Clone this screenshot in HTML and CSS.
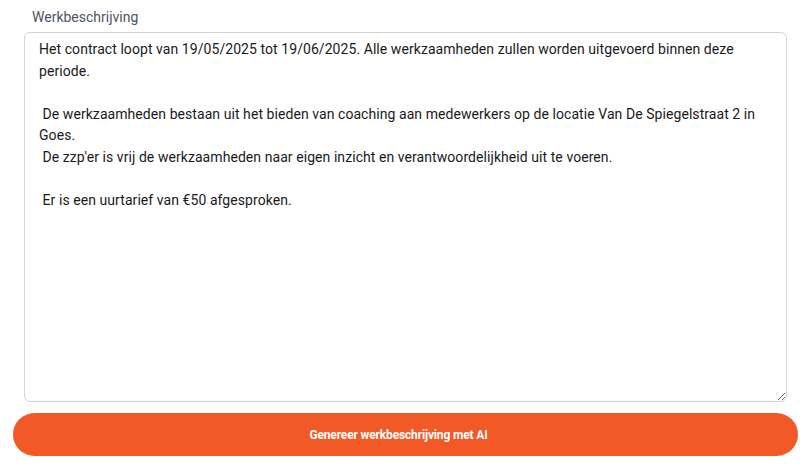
FILE: index.html
```html
<!DOCTYPE html>
<html lang="nl">
<head>
<meta charset="utf-8">
<title>Werkbeschrijving</title>
<link rel="stylesheet" href="styles.css">
</head>
<body>
<div class="page">
  <div class="field">
    <label class="field-label" for="desc">Werkbeschrijving</label>
    <textarea id="desc" class="field-input">Het contract loopt van 19/05/2025 tot 19/06/2025. Alle werkzaamheden zullen worden uitgevoerd binnen deze periode.

 De werkzaamheden bestaan uit het bieden van coaching aan medewerkers op de locatie Van De Spiegelstraat 2 in Goes.
 De zzp'er is vrij de werkzaamheden naar eigen inzicht en verantwoordelijkheid uit te voeren.

 Er is een uurtarief van €50 afgesproken.</textarea>
  </div>
  <button class="ai-button" type="button">Genereer werkbeschrijving met AI</button>
</div>
</body>
</html>
```

FILE: styles.css
```css
html, body {
  margin: 0;
  padding: 0;
  background: #ffffff;
}

body {
  font-family: Roboto, "Noto Sans", sans-serif;
}

.page {
  display: flex;
  flex-direction: column;
  padding: 7px 6px 0 13px;
}

.field {
  display: flex;
  flex-direction: column;
  padding: 0 17px 0 11px;
}

.field-label {
  font-size: 14px;
  line-height: 20px;
  color: #4b5563;
  padding-left: 8px;
  margin-bottom: 5px;
}

.field-input {
  box-sizing: border-box;
  width: 763px;
  height: 370px;
  border: 1px solid #d4d4d8;
  border-radius: 6px;
  padding: 6px 14px;
  font-family: Roboto, "Noto Sans", sans-serif;
  font-size: 14px;
  line-height: 21.5px;
  letter-spacing: 0.065px;
  color: #1a1a1a;
  resize: vertical;
  outline: none;
  background: #ffffff;
}

.ai-button {
  margin-top: 11px;
  width: 785px;
  height: 43px;
  border: none;
  border-radius: 22px;
  padding: 0 14px 0 0;
  background: #f15a27;
  color: #ffffff;
  font-family: Roboto, "Noto Sans", sans-serif;
  font-weight: 700;
  font-size: 12px;
  letter-spacing: -0.15px;
  cursor: pointer;
}
```
